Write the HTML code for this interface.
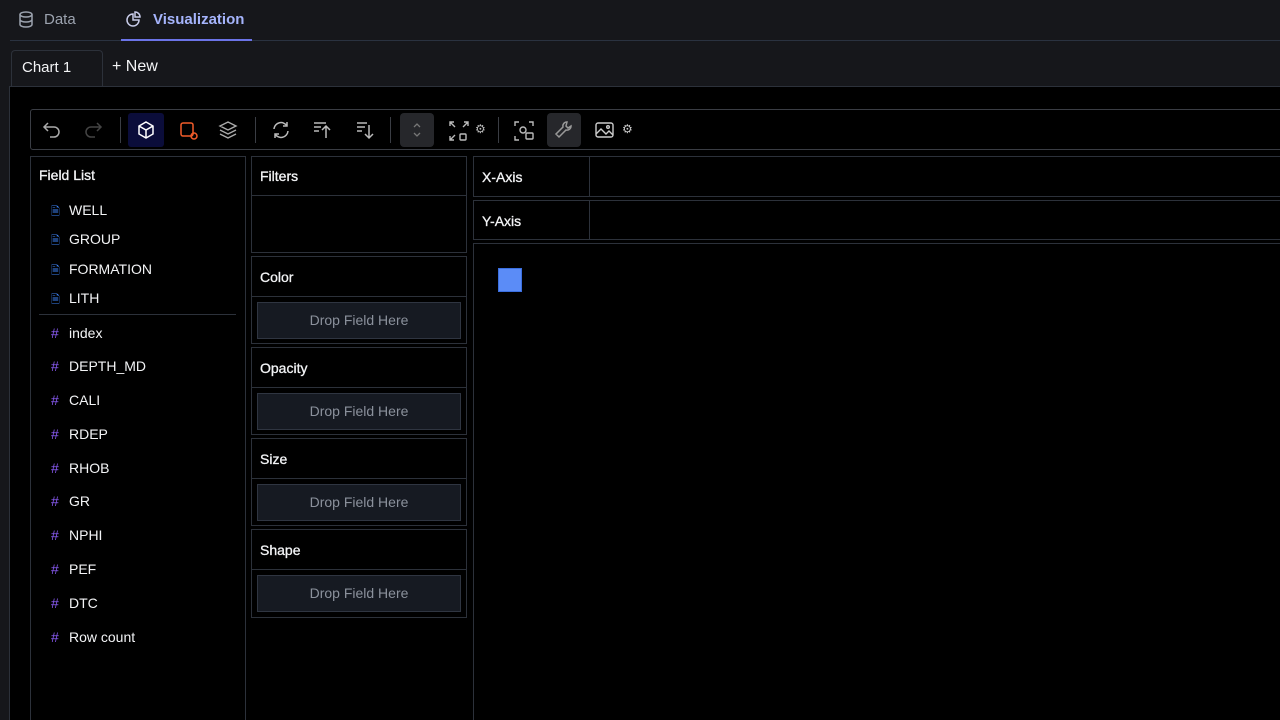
<!DOCTYPE html>
<html><head><style>
*{box-sizing:border-box;margin:0;padding:0}
html,body{width:1280px;height:720px;overflow:hidden}
body{background:#16171b;font-family:"Liberation Sans",sans-serif;color:#e5e7eb;position:relative}
.a{position:absolute}
.bx{position:absolute;border:1px solid #2c313a;background:#000}
.hd{font-size:14px;color:#f3f4f6;-webkit-text-stroke:0.3px #f3f4f6}
.drop{position:absolute;left:5px;right:5px;height:37px;background:#161a22;border:1px solid #2f3541;color:#8b919c;font-size:14px;text-align:center;line-height:35px}
.fl{position:absolute;left:20px;font-size:14px;color:#f3f4f6}
.fl i{font-style:normal;display:inline-block;width:18px;color:#8b5cf6}
svg{position:absolute}
</style></head><body>
<svg style="left:18px;top:11px" width="16" height="17" viewBox="0 0 16 17" fill="none" stroke="#9ca3af" stroke-width="1.5"><ellipse cx="8" cy="3.5" rx="6" ry="2.5"/><path d="M2 3.5v10c0 1.4 2.7 2.5 6 2.5s6-1.1 6-2.5v-10M2 8.5c0 1.4 2.7 2.5 6 2.5s6-1.1 6-2.5"/></svg>
<div class="a" style="left:44px;top:11px;font-size:15px;color:#9ca3af">Data</div>
<svg style="left:126px;top:11px" width="16" height="16" viewBox="0 0 16 16" fill="none" stroke="#c7cbe8" stroke-width="1.5"><path d="M7 3a6 6 0 1 0 6 6H7z"/><path d="M9 1v5h5a5 5 0 0 0-5-5z"/></svg>
<div class="a" style="left:153px;top:11px;font-size:15px;font-weight:bold;color:#a5b4fc">Visualization</div>
<div class="a" style="left:10px;top:40px;width:1270px;height:1px;background:#2a3240"></div>
<div class="a" style="left:121px;top:39px;width:131px;height:2px;background:#6b74e8"></div>
<div class="a" style="left:11px;top:50px;width:92px;height:37px;border:1px solid #2c313a;border-bottom:none;border-radius:4px 4px 0 0;background:#16171b"></div>
<div class="a" style="left:22px;top:59px;font-size:15px;color:#f3f4f6">Chart 1</div>
<div class="a" style="left:112px;top:58px;font-size:16px;color:#f3f4f6">+ New</div>
<div class="a" style="left:9px;top:86px;width:1271px;height:634px;background:#000;border-left:1px solid #2c313a;border-top:1px solid #2c313a"></div>
<div class="a" style="left:30px;top:109px;width:1260px;height:41px;border:1px solid #3a3d44;border-radius:3px;background:#000"></div>
<div class="a" style="left:128px;top:113px;width:36px;height:34px;background:#0b0d3a;border-radius:3px"></div>
<div class="a" style="left:400px;top:113px;width:34px;height:34px;background:#26272b;border-radius:4px"></div>
<div class="a" style="left:547px;top:113px;width:34px;height:34px;background:#26272b;border-radius:4px"></div>
<div class="a" style="left:120px;top:117px;width:1px;height:26px;background:#3a3d44"></div>
<div class="a" style="left:255px;top:117px;width:1px;height:26px;background:#3a3d44"></div>
<div class="a" style="left:390px;top:117px;width:1px;height:26px;background:#3a3d44"></div>
<div class="a" style="left:498px;top:117px;width:1px;height:26px;background:#3a3d44"></div>
<svg style="left:42px;top:121px" width="20" height="18" viewBox="0 0 20 18" fill="none" stroke="#aaa" stroke-width="1.5"><path d="M6 2L2 6l4 4M2 6h10a5 5 0 0 1 0 10H8"/></svg>
<svg style="left:83px;top:121px" width="20" height="18" viewBox="0 0 20 18" fill="none" stroke="#444" stroke-width="1.5"><path d="M14 2l4 4-4 4M18 6H8a5 5 0 0 0 0 10h4"/></svg>
<svg style="left:136px;top:120px" width="20" height="20" viewBox="0 0 20 20" fill="none" stroke="#fff" stroke-width="1.5"><path d="M10 2l7 4v8l-7 4-7-4V6z M3 6l7 4 7-4 M10 10v8"/></svg>
<svg style="left:178px;top:120px" width="22" height="22" viewBox="0 0 22 22" fill="none" stroke-width="1.5"><rect x="3" y="3" width="12" height="13" rx="2" stroke="#f25c2a"/><circle cx="16" cy="16" r="3" stroke="#f25c2a"/></svg>
<svg style="left:218px;top:120px" width="22" height="22" viewBox="0 0 22 22" fill="none" stroke="#aaa" stroke-width="1.4"><path d="M10 2l8 4-8 4-8-4z M2 10l8 4 8-4 M2 14l8 4 8-4"/></svg>
<svg style="left:271px;top:120px" width="20" height="20" viewBox="0 0 20 20" fill="none" stroke="#bbb" stroke-width="1.5"><path d="M3 9a7 7 0 0 1 13-3M17 11a7 7 0 0 1-13 3M16 2v4h-4M4 18v-4h4"/></svg>
<svg style="left:312px;top:120px" width="20" height="20" viewBox="0 0 20 20" fill="none" stroke="#bbb" stroke-width="1.5"><path d="M2 3h12M2 7h7M2 11h5M14 18V6M10 10l4-4 4 4"/></svg>
<svg style="left:355px;top:120px" width="20" height="20" viewBox="0 0 20 20" fill="none" stroke="#bbb" stroke-width="1.5"><path d="M2 3h10M2 7h8M2 11h5M14 5v13M10 14l4 4 4-4"/></svg>
<svg style="left:410px;top:121px" width="14" height="18" viewBox="0 0 14 18" fill="none" stroke="#777" stroke-width="1.3"><path d="M4 6l3-3 3 3M4 12l3 3 3-3"/></svg>
<svg style="left:448px;top:120px" width="22" height="22" viewBox="0 0 22 22" fill="none" stroke="#bbb" stroke-width="1.4"><path d="M2 6V2h4M2 2l5 5M20 6V2h-4M20 2l-5 5M2 16v4h4M2 20l5-5"/><rect x="12" y="14" width="6" height="6" rx="1"/></svg>
<div class="a" style="left:475px;top:122px;font-size:12px;color:#bbb">⚙</div>
<svg style="left:513px;top:120px" width="22" height="22" viewBox="0 0 22 22" fill="none" stroke="#bbb" stroke-width="1.4"><path d="M2 6V2h4M16 2h4v4M2 16v4h4"/><circle cx="10" cy="10" r="3"/><rect x="13" y="13" width="7" height="6" rx="1"/></svg>
<svg style="left:554px;top:120px" width="20" height="20" viewBox="0 0 20 20" fill="none" stroke="#999" stroke-width="1.5"><path d="M13 2a4 4 0 0 0-4 5L2 14l3 3 7-7a4 4 0 0 0 5-4l-3 2-2-2z"/></svg>
<svg style="left:595px;top:121px" width="20" height="18" viewBox="0 0 20 18" fill="none" stroke="#ccc" stroke-width="1.4"><rect x="1" y="2" width="17" height="14" rx="2"/><path d="M1 13l5-5 5 5 3-3 4 4"/><circle cx="13" cy="6" r="1.3"/></svg>
<div class="a" style="left:622px;top:122px;font-size:12px;color:#ccc">⚙</div>
<div class="bx" style="left:30px;top:156px;width:216px;height:570px"></div>
<div class="a hd" style="left:39px;top:167px">Field List</div>
<div class="a" style="left:39px;top:314px;width:197px;height:1px;background:#2c313a"></div>
<div class="fl" style="left:51px;top:202px"><i style="color:#3b82f6;font-size:11px">🗎</i>WELL</div>
<div class="fl" style="left:51px;top:231px"><i style="color:#3b82f6;font-size:11px">🗎</i>GROUP</div>
<div class="fl" style="left:51px;top:261px"><i style="color:#3b82f6;font-size:11px">🗎</i>FORMATION</div>
<div class="fl" style="left:51px;top:290px"><i style="color:#3b82f6;font-size:11px">🗎</i>LITH</div>
<div class="fl" style="left:51px;top:325px"><i>#</i>index</div>
<div class="fl" style="left:51px;top:358px"><i>#</i>DEPTH_MD</div>
<div class="fl" style="left:51px;top:392px"><i>#</i>CALI</div>
<div class="fl" style="left:51px;top:426px"><i>#</i>RDEP</div>
<div class="fl" style="left:51px;top:460px"><i>#</i>RHOB</div>
<div class="fl" style="left:51px;top:493px"><i>#</i>GR</div>
<div class="fl" style="left:51px;top:527px"><i>#</i>NPHI</div>
<div class="fl" style="left:51px;top:561px"><i>#</i>PEF</div>
<div class="fl" style="left:51px;top:595px"><i>#</i>DTC</div>
<div class="fl" style="left:51px;top:629px"><i>#</i>Row count</div>
<div class="bx" style="left:251px;top:156px;width:216px;height:97px"></div>
<div class="a" style="left:251px;top:195px;width:216px;height:1px;background:#2c313a"></div>
<div class="a hd" style="left:260px;top:168px">Filters</div>
<div class="bx" style="left:251px;top:256px;width:216px;height:88px"><div class="a hd" style="left:8px;top:12px">Color</div><div class="a" style="left:0;right:0;top:39px;height:1px;background:#2c313a"></div><div class="drop" style="top:45px">Drop Field Here</div></div>
<div class="bx" style="left:251px;top:347px;width:216px;height:88px"><div class="a hd" style="left:8px;top:12px">Opacity</div><div class="a" style="left:0;right:0;top:39px;height:1px;background:#2c313a"></div><div class="drop" style="top:45px">Drop Field Here</div></div>
<div class="bx" style="left:251px;top:438px;width:216px;height:88px"><div class="a hd" style="left:8px;top:12px">Size</div><div class="a" style="left:0;right:0;top:39px;height:1px;background:#2c313a"></div><div class="drop" style="top:45px">Drop Field Here</div></div>
<div class="bx" style="left:251px;top:529px;width:216px;height:89px"><div class="a hd" style="left:8px;top:12px">Shape</div><div class="a" style="left:0;right:0;top:39px;height:1px;background:#2c313a"></div><div class="drop" style="top:45px">Drop Field Here</div></div>
<div class="bx" style="left:473px;top:156px;width:820px;height:41px"><div class="a" style="left:115px;top:0;bottom:0;width:1px;background:#2c313a"></div><div class="a hd" style="left:8px;top:12px">X-Axis</div></div>
<div class="bx" style="left:473px;top:200px;width:820px;height:40px"><div class="a" style="left:115px;top:0;bottom:0;width:1px;background:#2c313a"></div><div class="a hd" style="left:8px;top:12px">Y-Axis</div></div>
<div class="bx" style="left:473px;top:243px;width:820px;height:490px"></div>
<div class="a" style="left:498px;top:268px;width:24px;height:24px;background:#5b8cf7;border:1px solid #3b6fe0"></div>
</body></html>
